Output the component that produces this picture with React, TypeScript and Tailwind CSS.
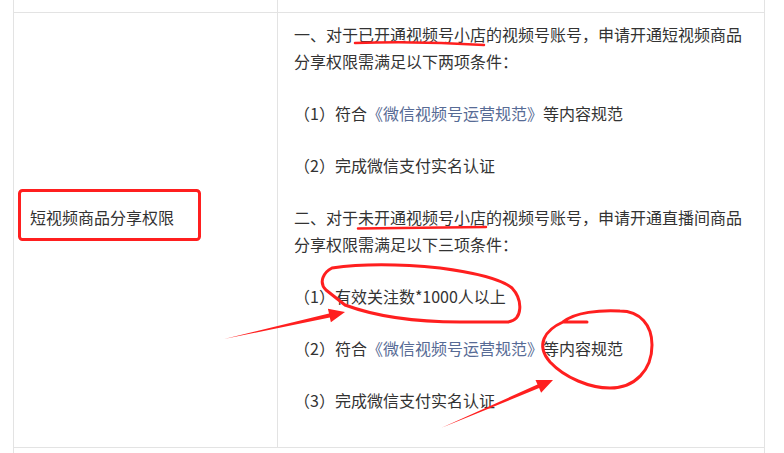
import React from 'react';

const LINK = 'text-[#576b95]';

export default function App() {
  return (
    <div className="relative w-[784px] h-[453px] overflow-hidden bg-white font-['Noto_Sans_CJK_SC',sans-serif] text-[16px] text-[#333]">
      <div className="pl-[13px]">
        <div className="w-[752px] border-l border-r border-[#e3e3e3]">
          {/* tail of previous row */}
          <div className="flex h-[12px]">
            <div className="w-[264px] border-r border-[#e3e3e3]" />
            <div className="flex-1" />
          </div>

          {/* main row */}
          <div className="flex border-t border-[#e3e3e3]">
            <div className="w-[264px] border-r border-[#e3e3e3] flex items-center pl-4">
              <p className="leading-[27px] mb-[25px]">短视频商品分享权限</p>
            </div>
            <div className="flex-1 pl-4 pr-4 pt-[8px] pb-[8px] leading-[27px]">
              <p className="mb-[25px]">一、对于已开通视频号小店的视频号账号，申请开通短视频商品分享权限需满足以下两项条件：</p>
              <p className="mb-[25px]">（1）符合<span className={LINK}>《微信视频号运营规范》</span>等内容规范</p>
              <p className="mb-[25px]">（2）完成微信支付实名认证</p>
              <p className="mb-[25px]">二、对于未开通视频号小店的视频号账号，申请开通直播间商品分享权限需满足以下三项条件：</p>
              <p className="mb-[25px]">（1）有效关注数*1000人以上</p>
              <p className="mb-[25px]">（2）符合<span className={LINK}>《微信视频号运营规范》</span>等内容规范</p>
              <p className="mb-[25px]">（3）完成微信支付实名认证</p>
            </div>
          </div>

          {/* next row */}
          <div className="h-[30px] border-t border-[#e3e3e3]" />
        </div>
      </div>

      {/* red markup drawn over the screenshot */}
      <svg className="absolute inset-0 pointer-events-none" width="784" height="453" viewBox="0 0 784 453">
        <g fill="none" stroke="#ff1f1f" strokeLinecap="round" strokeLinejoin="round">
          <rect x="19.5" y="190.5" width="180" height="49" rx="3" strokeWidth="3" />
          <path d="M355 43 Q420 41 484 45" strokeWidth="2.5" />
          <path d="M358 228.5 Q420 228 486 227" strokeWidth="2.5" />
          <path
            d="M332 268 C324 272 318 282 326 290 L345 305 C380 318 420 322 460 322 L508 322 C523 320 523 300 512 288 C500 278 470 272 440 268 C400 264 360 264 332 268"
            strokeWidth="3"
          />
          <path
            d="M587 322 L563 322 C545 330 535 345 550 362 C565 378 590 388 610 388 C635 388 652 370 652 345 C652 325 640 311 620 311 C600 310 575 312 563 322"
            strokeWidth="3"
          />
        </g>
        <g fill="#ff1f1f">
          <polygon points="224,339 329,313.5 327.9,308.7 345,312 330.9,322.3 329.8,317.5" />
          <polygon points="441,428 537.5,384.5 535.5,379.9 553,380 541.1,392.7 539.1,388.1" />
        </g>
      </svg>
    </div>
  );
}
